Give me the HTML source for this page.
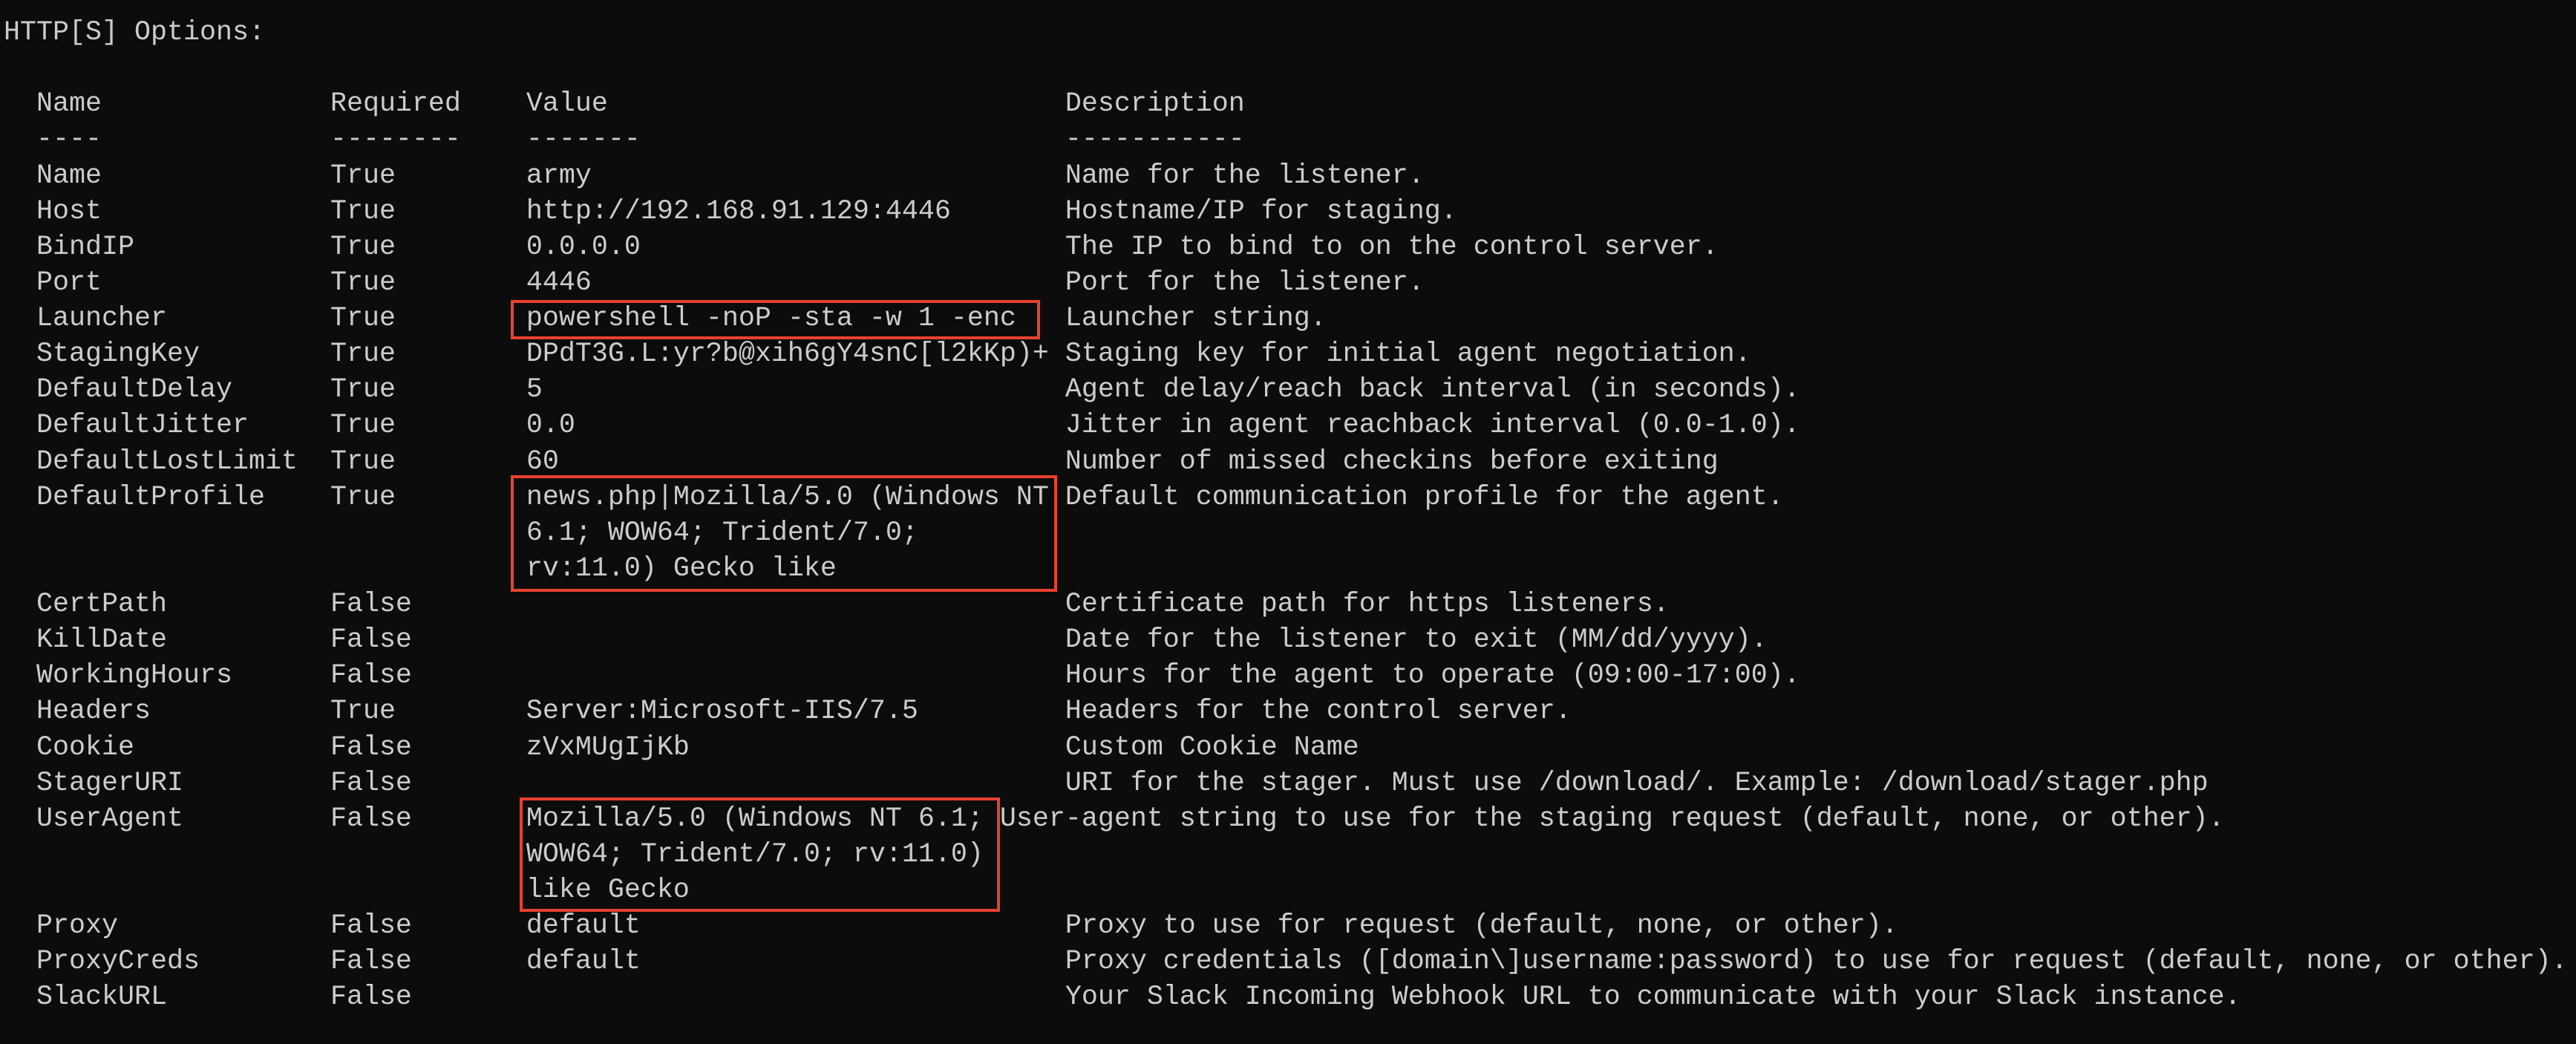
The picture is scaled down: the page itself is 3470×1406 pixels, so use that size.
<!DOCTYPE html>
<html><head><meta charset="utf-8">
<style>
html,body{margin:0;padding:0;background:#0c0c0c;}
body{width:3470px;height:1406px;position:relative;overflow:hidden;}
pre{position:absolute;left:5px;top:20px;margin:0;font-family:"Liberation Mono",monospace;font-size:36.67px;line-height:48.13px;color:#cccccc;white-space:pre;}
.b{position:absolute;border:4px solid #e8412f;box-sizing:border-box;}
</style></head><body>
<pre>HTTP[S] Options:

  Name              Required    Value                            Description
  ----              --------    -------                          -----------
  Name              True        army                             Name for the listener.
  Host              True        http://192.168.91.129:4446       Hostname/IP for staging.
  BindIP            True        0.0.0.0                          The IP to bind to on the control server.
  Port              True        4446                             Port for the listener.
  Launcher          True        powershell -noP -sta -w 1 -enc   Launcher string.
  StagingKey        True        DPdT3G.L:yr?b@xih6gY4snC[l2kKp)+ Staging key for initial agent negotiation.
  DefaultDelay      True        5                                Agent delay/reach back interval (in seconds).
  DefaultJitter     True        0.0                              Jitter in agent reachback interval (0.0-1.0).
  DefaultLostLimit  True        60                               Number of missed checkins before exiting
  DefaultProfile    True        news.php|Mozilla/5.0 (Windows NT Default communication profile for the agent.
                                6.1; WOW64; Trident/7.0;
                                rv:11.0) Gecko like
  CertPath          False                                        Certificate path for https listeners.
  KillDate          False                                        Date for the listener to exit (MM/dd/yyyy).
  WorkingHours      False                                        Hours for the agent to operate (09:00-17:00).
  Headers           True        Server:Microsoft-IIS/7.5         Headers for the control server.
  Cookie            False       zVxMUgIjKb                       Custom Cookie Name
  StagerURI         False                                        URI for the stager. Must use /download/. Example: /download/stager.php
  UserAgent         False       Mozilla/5.0 (Windows NT 6.1; User-agent string to use for the staging request (default, none, or other).
                                WOW64; Trident/7.0; rv:11.0)
                                like Gecko
  Proxy             False       default                          Proxy to use for request (default, none, or other).
  ProxyCreds        False       default                          Proxy credentials ([domain\]username:password) to use for request (default, none, or other).
  SlackURL          False                                        Your Slack Incoming Webhook URL to communicate with your Slack instance.</pre>
<div class="b" style="left:688px;top:404px;width:713px;height:53px;"></div>
<div class="b" style="left:688px;top:640px;width:736px;height:157px;"></div>
<div class="b" style="left:700px;top:1074px;width:647px;height:154px;"></div>
</body></html>
